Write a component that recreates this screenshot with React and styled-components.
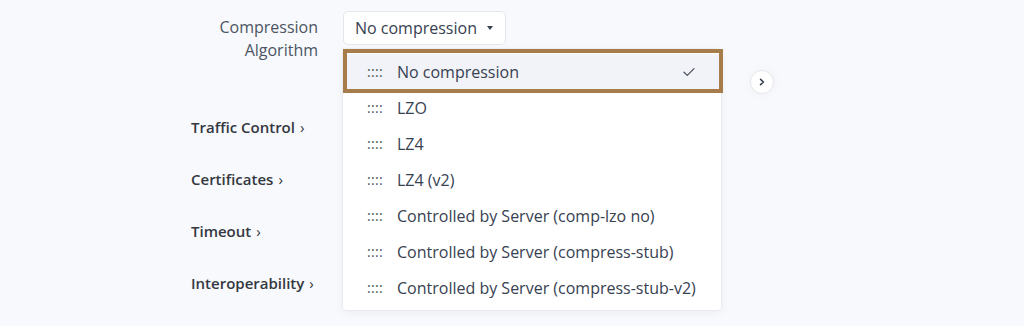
import React from "react";
import styled, { createGlobalStyle } from "styled-components";

const GlobalStyle = createGlobalStyle`
  html, body {
    margin: 0;
    padding: 0;
    background: #f8f9fc;
    font-family: "Open Sans", "Noto Sans", sans-serif;
    color: #374151;
  }
`;

export const Page = styled.div`
  width: 1024px;
  height: 326px;
  overflow: hidden;
  box-sizing: border-box;
  padding: 11px 0 0 191px;
  background: #f8f9fc;
`;

export const Content = styled.div`
  width: 583px;
  display: flex;
  flex-direction: column;
`;

export const FormRow = styled.div`
  display: flex;
  align-items: flex-start;
  gap: 25px;
`;

export const Label = styled.div`
  width: 127px;
  padding-top: 5px;
  text-align: right;
  font-size: 16px;
  line-height: 23px;
  color: #4b5563;
`;

export const SelectWrap = styled.div`
  position: relative;
`;

export const Trigger = styled.div`
  height: 34px;
  box-sizing: border-box;
  display: flex;
  align-items: center;
  gap: 10px;
  padding: 0 12px 0 11px;
  background: #fff;
  border: 1px solid #e5e7eb;
  border-radius: 5px;
  font-size: 16px;
  color: #374151;
  width: 163px;
  white-space: nowrap;
`;

export const Caret = styled.span`
  width: 0;
  height: 0;
  border-left: 3.5px solid transparent;
  border-right: 3.5px solid transparent;
  border-top: 4px solid #374151;
  margin-left: auto;
`;

export const Menu = styled.ul`
  position: absolute;
  top: calc(100% + 4px);
  left: 0;
  width: 378px;
  margin: 0;
  padding: 5px 0 4px;
  list-style: none;
  background: #fff;
  border-radius: 4px;
  box-shadow: 0 2px 10px rgba(30, 40, 80, 0.06), 0 0 0 1px rgba(30, 40, 80, 0.04);
  z-index: 5;
`;

export const Item = styled.li`
  position: relative;
  height: 36px;
  display: flex;
  align-items: center;
  padding: 0 26px 0 24px;
  font-size: 16px;
  color: #374151;
  white-space: nowrap;
  background: ${p => (p.$active ? "#f2f3f8" : "transparent")};

  ${p =>
    p.$active &&
    `
    &::after {
      content: "";
      position: absolute;
      top: -5px;
      bottom: -3px;
      left: 0;
      right: -2px;
      border: 4px solid #a67c4a;
      pointer-events: none;
    }
  `}
`;

export const Grip = styled.span`
  width: 30px;
  font-size: 14px;
  letter-spacing: 0.3px;
  color: #4b5563;
  flex-shrink: 0;
  position: relative;
  top: -1px;
`;

export const ItemText = styled.span`
  flex: 1;
`;

export const ScrollRow = styled.div`
  display: flex;
  justify-content: flex-end;
  margin-top: 8px;
`;

export const RoundBtn = styled.div`
  width: 24px;
  height: 24px;
  box-sizing: border-box;
  border-radius: 50%;
  background: #fff;
  border: 1px solid #e5e7eb;
  display: flex;
  align-items: center;
  justify-content: center;
  box-shadow: 0 0 12px rgba(30, 40, 80, 0.04);
`;

export const Sections = styled.div`
  display: flex;
  flex-direction: column;
  gap: 28px;
  margin-top: 21px;
`;

export const SectionTitle = styled.div`
  font-size: 15px;
  line-height: 24px;
  font-weight: 600;
  color: #333840;
  span {
    margin-left: 5px;
    font-weight: 400;
  }
`;

const options = [
  "No compression",
  "LZO",
  "LZ4",
  "LZ4 (v2)",
  "Controlled by Server (comp-lzo no)",
  "Controlled by Server (compress-stub)",
  "Controlled by Server (compress-stub-v2)",
];

const sections = ["Traffic Control", "Certificates", "Timeout", "Interoperability"];

const Check = () => (
  <svg width="12" height="10" viewBox="0 0 12 10" fill="none">
    <path d="M1 5.2 L4.3 8.4 L11 1.6" stroke="#4b5563" strokeWidth="1.3" strokeLinecap="round" strokeLinejoin="round" />
  </svg>
);

const Chevron = () => (
  <svg width="8" height="8" viewBox="0 0 8 8" fill="none">
    <path d="M2.6 1.3 L5.4 4 L2.6 6.7" stroke="#374151" strokeWidth="1.6" strokeLinecap="round" strokeLinejoin="round" />
  </svg>
);

export default function App() {
  return (
    <>
      <GlobalStyle />
      <Page>
        <Content>
          <FormRow>
            <Label>Compression Algorithm</Label>
            <SelectWrap>
              <Trigger>
                No compression
                <Caret />
              </Trigger>
              <Menu>
                {options.map((o, i) => (
                  <Item key={o} $active={i === 0}>
                    <Grip>::::</Grip>
                    <ItemText>{o}</ItemText>
                    {i === 0 && <Check />}
                  </Item>
                ))}
              </Menu>
            </SelectWrap>
          </FormRow>
          <ScrollRow>
            <RoundBtn>
              <Chevron />
            </RoundBtn>
          </ScrollRow>
          <Sections>
            {sections.map(s => (
              <SectionTitle key={s}>
                {s}
                <span>›</span>
              </SectionTitle>
            ))}
          </Sections>
        </Content>
      </Page>
    </>
  );
}
